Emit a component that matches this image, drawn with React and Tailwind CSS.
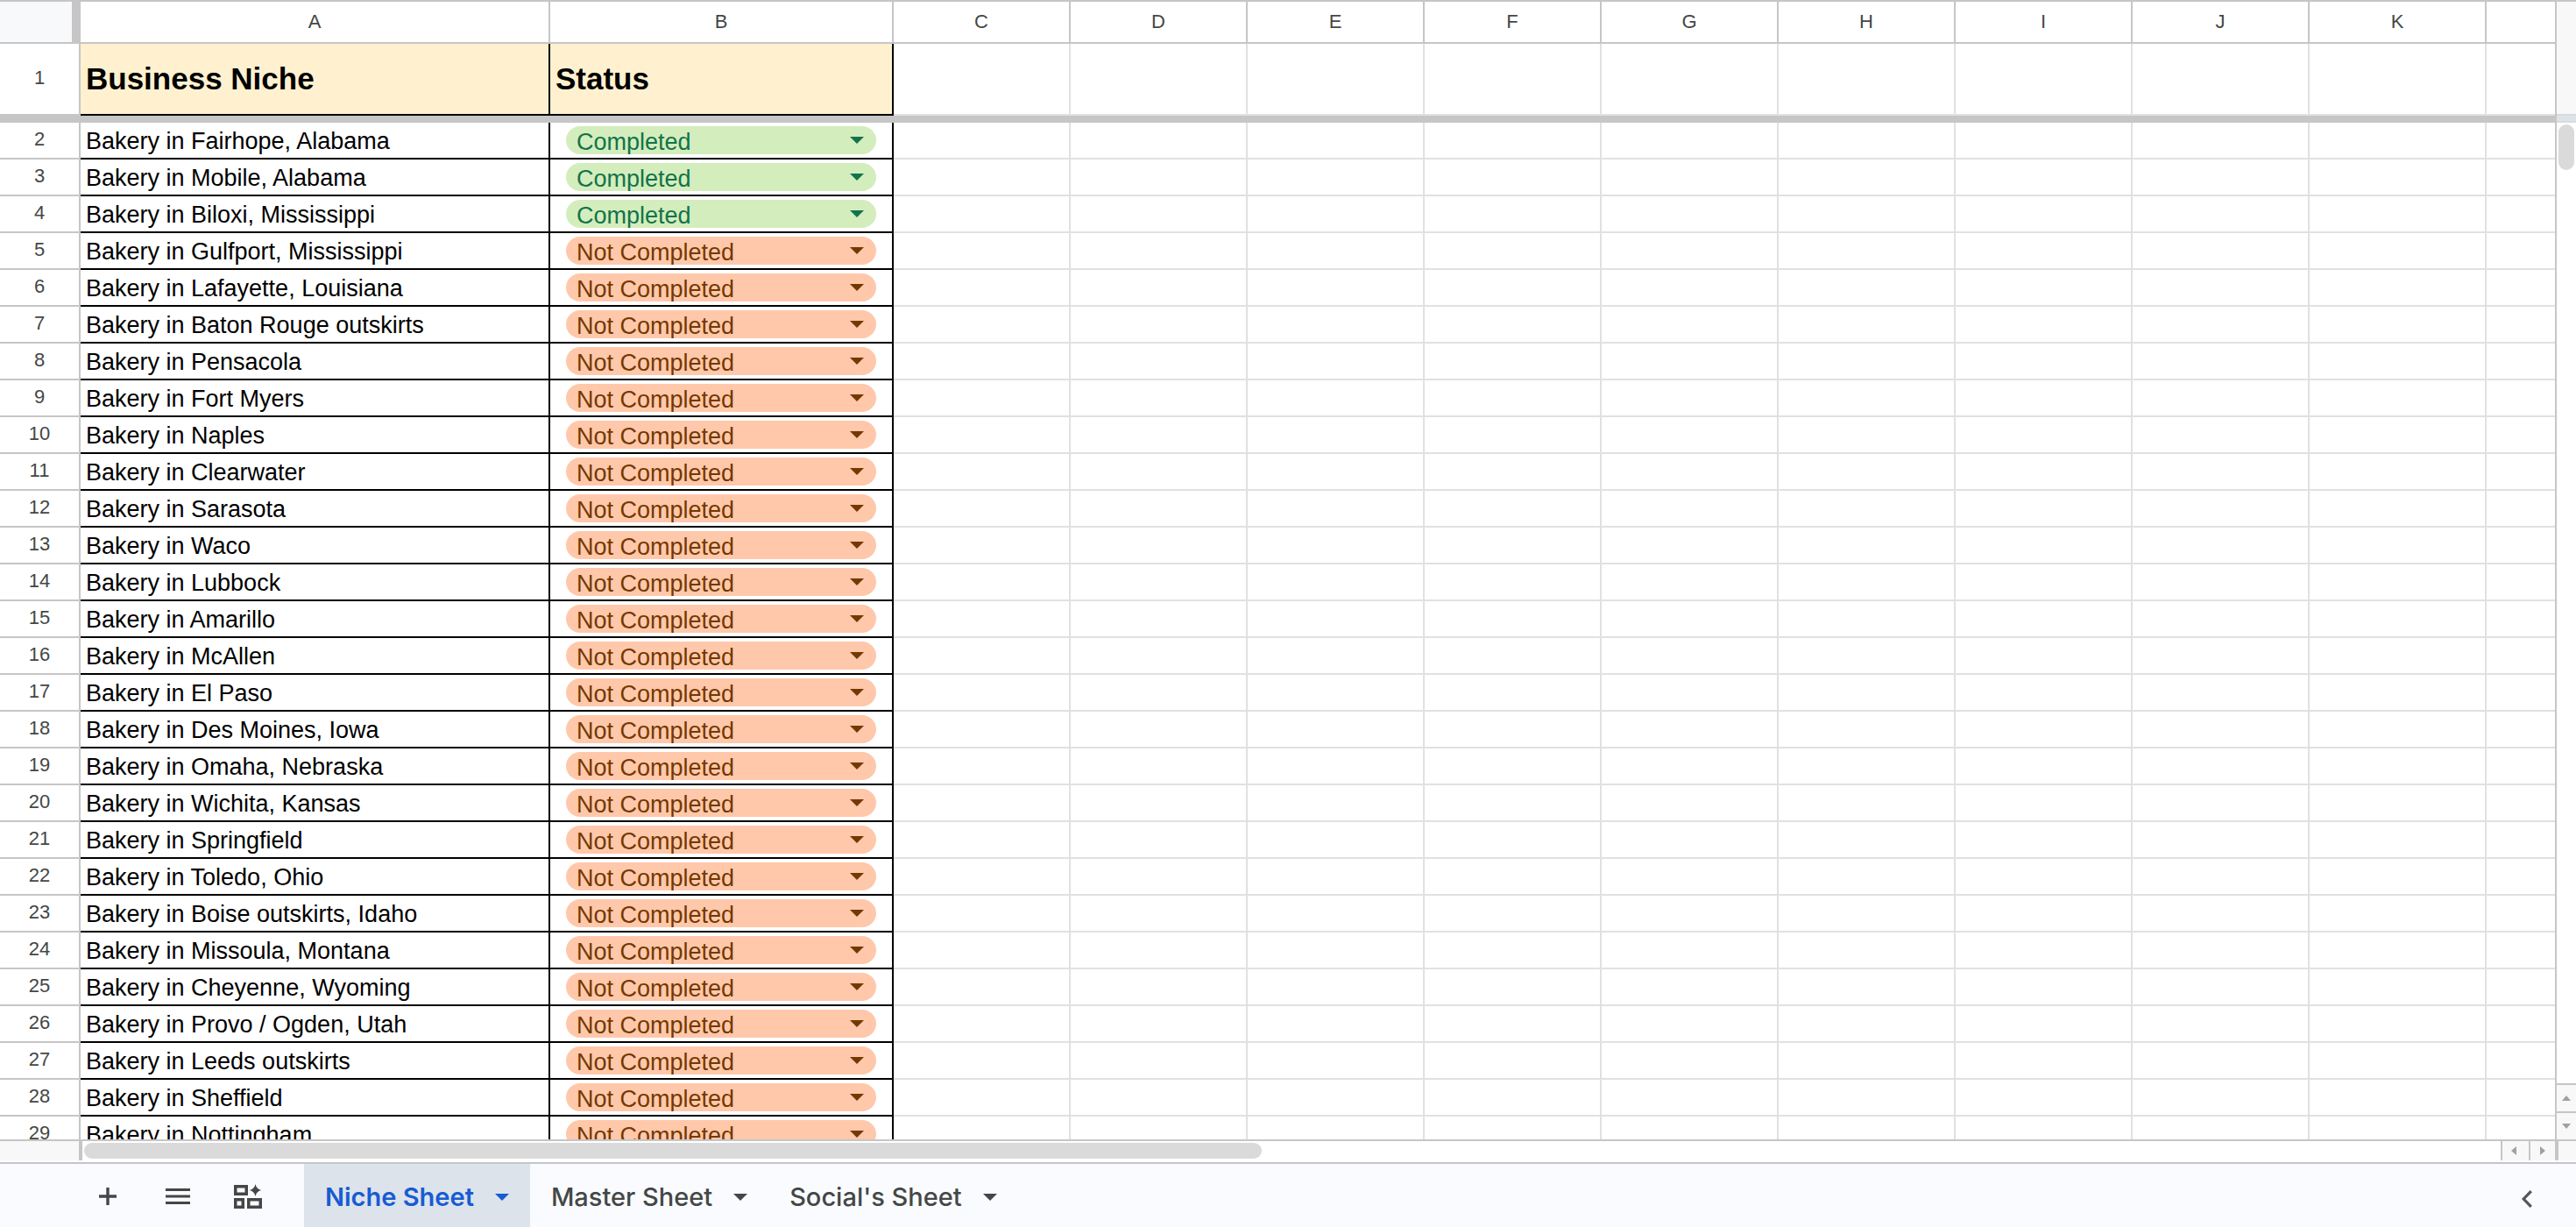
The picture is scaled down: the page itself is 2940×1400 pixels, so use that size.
import React, { useState } from 'react';

const EMPTY_COLUMNS = ['C', 'D', 'E', 'F', 'G', 'H', 'I', 'J', 'K', ''];

const NICHES = [
  { name: 'Bakery in Fairhope, Alabama', status: 'Completed' },
  { name: 'Bakery in Mobile, Alabama', status: 'Completed' },
  { name: 'Bakery in Biloxi, Mississippi', status: 'Completed' },
  { name: 'Bakery in Gulfport, Mississippi', status: 'Not Completed' },
  { name: 'Bakery in Lafayette, Louisiana', status: 'Not Completed' },
  { name: 'Bakery in Baton Rouge outskirts', status: 'Not Completed' },
  { name: 'Bakery in Pensacola', status: 'Not Completed' },
  { name: 'Bakery in Fort Myers', status: 'Not Completed' },
  { name: 'Bakery in Naples', status: 'Not Completed' },
  { name: 'Bakery in Clearwater', status: 'Not Completed' },
  { name: 'Bakery in Sarasota', status: 'Not Completed' },
  { name: 'Bakery in Waco', status: 'Not Completed' },
  { name: 'Bakery in Lubbock', status: 'Not Completed' },
  { name: 'Bakery in Amarillo', status: 'Not Completed' },
  { name: 'Bakery in McAllen', status: 'Not Completed' },
  { name: 'Bakery in El Paso', status: 'Not Completed' },
  { name: 'Bakery in Des Moines, Iowa', status: 'Not Completed' },
  { name: 'Bakery in Omaha, Nebraska', status: 'Not Completed' },
  { name: 'Bakery in Wichita, Kansas', status: 'Not Completed' },
  { name: 'Bakery in Springfield', status: 'Not Completed' },
  { name: 'Bakery in Toledo, Ohio', status: 'Not Completed' },
  { name: 'Bakery in Boise outskirts, Idaho', status: 'Not Completed' },
  { name: 'Bakery in Missoula, Montana', status: 'Not Completed' },
  { name: 'Bakery in Cheyenne, Wyoming', status: 'Not Completed' },
  { name: 'Bakery in Provo / Ogden, Utah', status: 'Not Completed' },
  { name: 'Bakery in Leeds outskirts', status: 'Not Completed' },
  { name: 'Bakery in Sheffield', status: 'Not Completed' },
  { name: 'Bakery in Nottingham', status: 'Not Completed' },
];

const SHEETS = ['Niche Sheet', 'Master Sheet', "Social's Sheet"];

const App = () => {
  const [niches, setNiches] = useState(NICHES);
  const [activeSheet, setActiveSheet] = useState('Niche Sheet');

  const handleStatus = (index, status) => {
    setNiches(niches.map((n, i) => (i === index ? { ...n, status } : n)));
  };

  return (
    <div className="flex h-screen flex-col overflow-hidden border-t-2 border-[#c6c6c6] bg-white font-['Liberation_Sans',Arial,sans-serif] text-black">
      <div className="flex min-h-0 flex-1">
        <div className="min-w-0 flex-1 overflow-hidden">
          <table className="w-full table-fixed border-separate border-spacing-0">
            <colgroup>
              <col className="w-[92px]" />
              <col className="w-[536px]" />
              <col className="w-[392px]" />
              {EMPTY_COLUMNS.map((letter) => (
                <col key={letter} className={letter ? 'w-[202px]' : ''} />
              ))}
            </colgroup>
            <thead>
              <tr>
                <td className="h-12 border-r-[10px] border-b-2 border-[#c6c6c6] bg-[#f8f9fa] p-0" />
                <ColumnHeader letter="A" />
                <ColumnHeader letter="B" />
                {EMPTY_COLUMNS.map((letter) => (
                  <ColumnHeader key={letter} letter={letter} />
                ))}
              </tr>
            </thead>
            <tbody>
              <tr>
                <RowHeader number={1} />
                <td className="h-[82px] border-r-2 border-b-2 border-black bg-[#fff1cf] py-0 pr-0 pl-[6px] text-[35px] leading-10 font-bold">Business Niche</td>
                <td className="border-r-2 border-b-2 border-black bg-[#fff1cf] py-0 pr-0 pl-[6px] text-[35px] leading-10 font-bold">Status</td>
                <EmptyCells />
              </tr>
              {/* Frozen row divider */}
              <tr>
                <td colSpan={13} className="h-2 bg-[#c6c6c6] p-0" />
              </tr>
              {niches.map((niche, i) => (
                <tr key={niche.name}>
                  <RowHeader number={i + 2} />
                  <td className="h-[42px] truncate border-r-2 border-b-2 border-black pt-[2px] pr-0 pb-0 pl-[6px] text-[27px] leading-8">{niche.name}</td>
                  <td className="border-r-2 border-b-2 border-black px-[18px] py-0">
                    <StatusChip
                      label={`Status of ${niche.name}`}
                      status={niche.status}
                      onChange={(e) => handleStatus(i, e.target.value)}
                    />
                  </td>
                  <EmptyCells />
                </tr>
              ))}
            </tbody>
          </table>
        </div>

        {/* Vertical scrollbar */}
        <div className="flex w-6 shrink-0 flex-col border-l-2 border-[#c6c6c6]">
          <div className="h-32 bg-[#f8f8f8]" />
          <div className="h-[10px] border-y-2 border-[#dadada] bg-[#dce3eb]" />
          <div className="flex-1 px-[2px] pt-[2px]">
            <div className="h-[52px] w-[18px] rounded-full bg-[#dadada]" />
          </div>
          <button aria-label="Scroll up" className="flex h-8 items-center justify-center border-t-2 border-[#c6c6c6] bg-[#f8f8f8]">
            <svg width="10" height="6" viewBox="0 0 10 6" fill="#a0a0a0"><path d="M0 6 5 0l5 6z" /></svg>
          </button>
          <button aria-label="Scroll down" className="flex h-8 items-center justify-center border-t-2 border-[#c6c6c6] bg-[#f8f8f8]">
            <svg width="10" height="6" viewBox="0 0 10 6" fill="#a0a0a0"><path d="M0 0h10L5 6z" /></svg>
          </button>
        </div>
      </div>

      {/* Horizontal scrollbar */}
      <div className="flex h-[26px] shrink-0 border-t-2 border-[#c6c6c6] pb-[2px]">
        <div className="w-[94px] border-r-4 border-[#c6c6c6] bg-[#f8f8f8]" />
        <div className="flex flex-1 items-center px-[2px]">
          <div className="h-[18px] w-[1344px] rounded-full bg-[#dadada]" />
        </div>
        <button aria-label="Scroll left" className="flex w-8 items-center justify-center border-l-2 border-[#c6c6c6] bg-[#f8f8f8] pr-1">
          <svg width="6" height="10" viewBox="0 0 6 10" fill="#a0a0a0"><path d="M6 0v10L0 5z" /></svg>
        </button>
        <button aria-label="Scroll right" className="flex w-[30px] items-center justify-center border-l-2 border-[#c6c6c6] bg-[#f8f8f8]">
          <svg width="6" height="10" viewBox="0 0 6 10" fill="#a0a0a0"><path d="M0 0v10l6-5z" /></svg>
        </button>
        <div className="w-6 border-l-4 border-[#c6c6c6] bg-[#f8f8f8]" />
      </div>

      {/* Sheet tabs */}
      <nav className="flex h-[74px] shrink-0 border-t-2 border-[#c4c7c5] bg-[#f9fbff] pr-4 pl-[83px] font-[Inter,sans-serif] text-[#444746]">
        <button aria-label="Add sheet" className="flex w-20 items-center justify-center pt-[2px]">
          <svg width="20" height="20" viewBox="0 0 20 20" fill="currentColor"><path d="M8.3 0h3.4v8.3H20v3.4h-8.3V20H8.3v-8.3H0V8.3h8.3z" /></svg>
        </button>
        <button aria-label="All sheets" className="flex w-20 items-center justify-center pt-[2px]">
          <svg width="28" height="18" viewBox="0 0 28 18" fill="currentColor"><path d="M0 0h28v3H0zM0 7.500h28v3H0zM0 15h28v3H0z" /></svg>
        </button>
        <button aria-label="Insert table" className="flex w-20 items-center justify-center pt-[2px]">
          <svg width="32" height="28" viewBox="0 0 32 28">
            <g fill="none" stroke="currentColor" strokeWidth="3.500">
              <path d="M1.750 2.750h12.500v8.500h-12.500zM1.750 17.750h8.500v8.500h-8.500zM16.750 17.750h13.500v8.500h-13.500z" />
            </g>
            <path d="M24.500 0c1.200 4.200 2.600 5.700 6.700 7-4.100 1.300-5.500 2.800-6.700 7-1.200-4.200-2.600-5.700-6.700-7 4.100-1.300 5.500-2.800 6.700-7z" fill="currentColor" />
          </svg>
        </button>
        <div className="ml-6 flex">
          {SHEETS.map((sheet) => (
            <button
              key={sheet}
              onClick={() => setActiveSheet(sheet)}
              className={`flex items-center gap-6 px-6 pt-1 text-[29px] leading-9 ${
                sheet === activeSheet ? 'bg-[#dce3eb] font-semibold text-[#185bd3]' : 'font-medium'
              }`}
            >
              {sheet}
              <svg width="16" height="8" viewBox="0 0 16 8" fill="currentColor"><path d="M0 0h16L8 8z" /></svg>
            </button>
          ))}
        </div>
        <button aria-label="Show side panel" className="ml-auto flex w-20 items-center justify-center pt-2">
          <svg width="12" height="20" viewBox="0 0 12 20" fill="none" stroke="#555" strokeWidth="3.200"><path d="M10.800 1.200 2.200 10l8.600 8.800" /></svg>
        </button>
      </nav>
    </div>
  );
};

const ColumnHeader = ({ letter }) => (
  <th
    scope="col"
    className={`border-b-2 border-[#c6c6c6] p-0 text-center text-[22px] leading-8 font-normal text-[#444746] ${letter ? 'border-r-2' : ''}`}
  >
    {letter}
  </th>
);

const RowHeader = ({ number }) => (
  <th scope="row" className="border-r-2 border-b-2 border-[#c6c6c6] px-0 pt-0 pb-[2px] text-center text-[22px] leading-8 font-normal text-[#444746]">
    {number}
  </th>
);

const EmptyCells = () =>
  EMPTY_COLUMNS.map((letter) => (
    <td key={letter} className={`border-b-2 border-[#e1e1e1] p-0 ${letter ? 'border-r-2' : ''}`} />
  ));

const StatusChip = ({ label, status, onChange }) => (
  <div className={`relative h-8 rounded-full ${status === 'Completed' ? 'bg-[#d4edbc] text-[#11734b]' : 'bg-[#ffc8aa] text-[#753800]'}`}>
    <select
      aria-label={label}
      value={status}
      onChange={onChange}
      className="block h-8 w-full appearance-none rounded-full bg-transparent pt-[2px] pr-10 pb-0 pl-3 text-[27px] leading-8 outline-none"
    >
      <option>Completed</option>
      <option>Not Completed</option>
    </select>
    <svg className="pointer-events-none absolute top-3 right-[14px]" width="16" height="8" viewBox="0 0 16 8" fill="currentColor">
      <path d="M0 0h16L8 8z" />
    </svg>
  </div>
);

export default App;
